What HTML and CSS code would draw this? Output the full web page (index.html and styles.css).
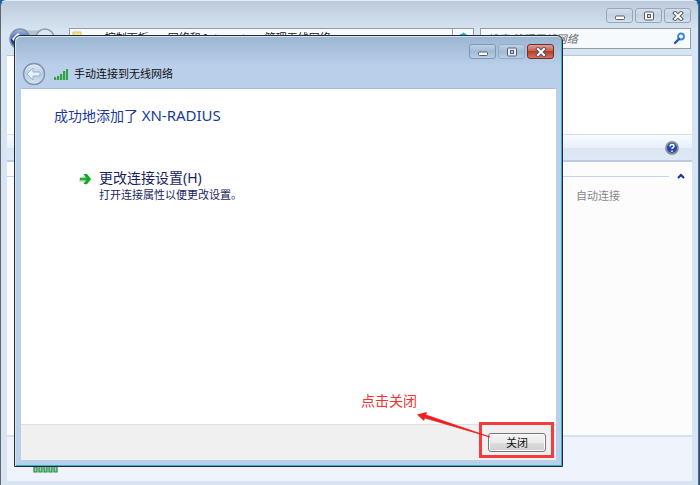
FILE: index.html
```html
<!DOCTYPE html>
<html lang="zh-CN">
<head>
<meta charset="utf-8">
<title>手动连接到无线网络</title>
<link rel="stylesheet" href="styles.css">
</head>
<body>
<main class="window">
  <header class="window-top">
    <div class="captions">
      <button class="cap" type="button" aria-label="最小化"><svg width="12" height="10" viewBox="0 0 12 10"><rect x="1.5" y="5" width="9" height="3.500" rx="1" fill="#fff" stroke="#585d66"/></svg></button>
      <button class="cap" type="button" aria-label="最大化"><svg width="12" height="10" viewBox="0 0 12 10"><rect x="1.5" y="1" width="9" height="8" rx="1" fill="#fff" stroke="#585d66"/><rect x="4.5" y="3.5" width="3" height="3" fill="#cbd6e4" stroke="#585d66"/></svg></button>
      <button class="cap" type="button" aria-label="关闭窗口"><svg width="12" height="10" viewBox="0 0 12 10"><path d="M3 2l6 6M9 2L3 8" stroke="#585d66" stroke-width="4" stroke-linecap="square"/><path d="M3 2l6 6M9 2L3 8" stroke="#fff" stroke-width="2" stroke-linecap="square"/></svg></button>
    </div>
    <div class="nav">
      <svg class="travel" width="48" height="22" viewBox="0 0 48 22">
        <defs><linearGradient id="blue" x2="0" y2="1"><stop offset="0" stop-color="#a9bde4"/><stop offset=".48" stop-color="#4568b4"/><stop offset=".5" stop-color="#062a86"/><stop offset="1" stop-color="#2c8ce0"/></linearGradient></defs>
        <path d="M12 1q12 3 24 0v19H12z" fill="#b7c3d2"/>
        <circle cx="12" cy="11" r="10" fill="url(#blue)" stroke="#8391a8" stroke-width="1.5"/>
        <path d="M6 11h11M11 6l-5 5 5 5" fill="none" stroke="#fff" stroke-width="3"/>
        <circle cx="37" cy="10" r="9" fill="#dce6f1" stroke="#8f9cab" stroke-width="1.5"/>
      </svg>
      <div class="address">
        <svg width="10" height="14" viewBox="0 0 10 14"><path d="M1 1h8v12H1z" fill="#f5e488" stroke="#d8c468"/></svg>
        <span class="crumb first">▸ 控制面板</span><span class="crumb">▸ 网络和 Internet</span><span class="crumb">▸ 管理无线网络</span>
        <span class="refresh"><svg width="12" height="14" viewBox="0 0 12 14"><path d="M2 8q0-4 5-5M7 3v5l3-3z" fill="none" stroke="#29a8d4" stroke-width="2"/></svg></span>
      </div>
      <div class="search">
        <input type="text" aria-label="搜索" placeholder="搜索 管理无线网络">
        <svg width="13" height="13" viewBox="0 0 13 13"><circle cx="8" cy="4.5" r="3" fill="#eff9ff" stroke="#3888d8" stroke-width="1.8"/><path d="M6 7l-4 4" stroke="#2458b0" stroke-width="2.4" stroke-linecap="round"/></svg>
      </div>
    </div>
  </header>
  <section class="explorer">
    <div class="intro"></div>
    <div class="toolbar">
      <button class="help" type="button" aria-label="帮助"><svg width="14" height="14" viewBox="0 0 14 14"><circle cx="7" cy="7" r="6" fill="#2448b4" stroke="#8d9098" stroke-width="1.8"/><path d="M5 5.4q0-2 2-2t2 1.7q0 1-1 1.6-1 .5-1 1.4M7 9.4v1.6" fill="none" stroke="#fff" stroke-width="1.5"/></svg></button>
    </div>
    <div class="list">
      <div class="group"><span class="rule"></span><svg width="8" height="6" viewBox="0 0 8 6"><path d="M1 5l3-3 3 3" fill="none" stroke="#10309a" stroke-width="2"/></svg></div>
      <p class="mode">自动连接</p>
    </div>
    <footer class="details">
      <svg width="25" height="18" viewBox="0 0 25 18"><g fill="#8fd6a0" stroke="#218a42" stroke-width="1.2"><path d="M1 12h3v5H1zM6 10h3v7H6zM11 7h3v10h-3zM16 4h3v13h-3zM21 1h3v16h-3z"/></g></svg>
    </footer>
  </section>

  <section class="dialog" role="dialog" aria-labelledby="dialog-title">
    <header class="dialog-top">
      <div class="captions">
        <button class="cap" type="button" aria-label="最小化"><svg width="12" height="10" viewBox="0 0 12 10"><rect x="1.5" y="5" width="9" height="3.500" rx="1" fill="#fff" stroke="#585d66"/></svg></button>
        <button class="cap" type="button" aria-label="最大化" disabled><svg width="12" height="10" viewBox="0 0 12 10"><rect x="1.5" y="1" width="9" height="8" rx="1" fill="#e8eef6" stroke="#585d76"/><rect x="4.5" y="3.5" width="3" height="3" fill="#aec4de" stroke="#585d76"/></svg></button>
        <button class="cap red" type="button" aria-label="关闭窗口"><svg width="12" height="10" viewBox="0 0 12 10"><path d="M3 2l6 6M9 2L3 8" stroke="#585066" stroke-width="4" stroke-linecap="square"/><path d="M3 2l6 6M9 2L3 8" stroke="#fff" stroke-width="2" stroke-linecap="square"/></svg></button>
      </div>
      <div class="caption-row">
        <button class="back" type="button" aria-label="返回"><svg width="24" height="24" viewBox="0 0 24 24">
          <defs><linearGradient id="pale" x2="0" y2="1"><stop offset="0" stop-color="#e3ecf6"/><stop offset=".5" stop-color="#b9cde1"/><stop offset="1" stop-color="#d3e5f6"/></linearGradient></defs>
          <circle cx="12" cy="12" r="10.5" fill="url(#pale)" stroke="#8194aa" stroke-width="1.4"/><path d="M5 12l6-6v4h7v4h-7v4z" fill="#e8f1fa" stroke="#9cb2c9"/></svg></button>
        <svg class="signal" width="14" height="13" viewBox="0 0 14 13"><path d="M0 9h2v3H0zM3 8h2v4H3zM6 6h2v6H6zM9 3h2v9H9zM12 1h2v11h-2z" fill="#35a050"/><path d="M2.500 10v2M5.500 8v4M8.500 6v6M11.500 3v9" stroke="#8fcba2"/></svg>
        <h1 id="dialog-title">手动连接到无线网络</h1>
      </div>
    </header>
    <div class="page">
      <h2>成功地添加了 <span class="ssid">XN-RADIUS</span></h2>
      <a class="command" href="#settings">
        <svg width="14" height="14" viewBox="0 0 14 14"><path d="M1 8h9M6.500 3l4.500 4.500L6.500 12" fill="none" stroke="#dcdfdc" stroke-width="4"/><path d="M2 7h8" stroke="#19b52a" stroke-width="2.800"/><path d="M5.500 2H9l4 5-4 5H5.500L9 7z" fill="#12a822"/></svg>
        <span class="command-text"><span class="command-title">更改连接设置(H)</span><span class="command-note">打开连接属性以便更改设置。</span></span>
      </a>
    </div>
    <footer class="actions">
      <button class="close" type="button">关闭</button>
      <div class="callout">
        <span class="callout-label">点击关闭</span>
        <svg class="callout-arrow" width="74" height="28" viewBox="0 0 74 28"><path d="M73 26L9 4 8 7z" fill="#f01c20" stroke="#f01c20" stroke-width=".8"/><path d="M0 3.500L10 1 7 10z" fill="#f01c20"/></svg>
      </div>
    </footer>
  </section>
</main>
</body>
</html>
```
FILE: styles.css
```css
* { box-sizing: border-box; }
html, body { height: 100%; }
body {
  margin: 0;
  background: linear-gradient(90deg, #1464b4, #0c4a94 50%, #14549e);
  font: 11px/14px "Noto Sans", "Noto Sans CJK SC", sans-serif;
  color: #111;
}
button { padding: 0; border: 0; background: none; font: inherit; color: inherit; }
svg { display: block; flex: none; }
h1, h2, p { margin: 0; font-weight: 400; }

.window {
  position: relative;
  display: flex;
  flex-direction: column;
  min-height: 100%;
  margin-right: 1px;
  padding: 0 6px 4px;
  border: solid #60676f;
  border-width: 1px 1px 0;
  border-top-color: #e4edf5;
  border-radius: 6px 6px 0 0;
  background: linear-gradient(#bccbdb, #d7e4f2 30px);
}
.window-top { display: flex; flex-direction: column; gap: 5px; padding: 7px 1px 6px 0; }
.captions { display: flex; justify-content: flex-end; gap: 2px; }
.cap {
  display: grid;
  place-items: center;
  width: 27px;
  height: 15px;
  border: 1px solid #96a5b8;
  border-radius: 3px;
  background: linear-gradient(#d3dfeb, #c3d1e0 50%, #d3e0ed);
}
.nav { display: flex; height: 21px; }
.travel { margin-left: 1px; }
.address, .search {
  display: flex;
  border: 1px solid #959da4;
  background: #f7fafc;
}
.address { flex: 1; margin-left: 13px; padding: 2px 0 0 2px; color: #222; white-space: nowrap; overflow: hidden; }
.crumb { margin-left: 10px; }
.crumb.first { margin-left: 14px; }
.refresh { margin: -2px 0 0 auto; padding: 2px 4px; border-left: 1px solid #959da4; }
.search { align-items: center; width: 211px; margin-left: 6px; padding-right: 4px; }
.search input {
  flex: 1;
  min-width: 0;
  padding: 0 6px;
  border: 0;
  outline: 0;
  background: none;
  font: inherit;
  font-style: italic;
}
.search input::placeholder { color: #666; opacity: 1; }

.explorer { display: flex; flex: 1; flex-direction: column; background: #fcfcfc; border-top: 1px solid #b7c6d6; }
.intro { height: 78px; background: #fff; }
.toolbar {
  display: flex;
  align-items: center;
  justify-content: flex-end;
  height: 28px;
  padding-right: 13px;
  border-top: 1px solid #d4e0ee;
  border-bottom: 2px solid #bccbe0;
  background: linear-gradient(#f8fbff, #e8f0fa 50%, #dbe5f3 52%, #dee8f6);
}
.list { flex: 1; padding: 10px 7px 0 0; }
.group { display: flex; align-items: center; gap: 7px; height: 8px; }
.rule { flex: 1; margin-right: 1px; border-top: 1px solid #c5d4ea; }
.mode { width: 109px; margin: 9px 0 0 auto; color: #888; }
.details { display: flex; height: 46px; padding: 18px 26px 0; border-top: 2px solid #d6e0ee; background: #eff3fb; }

.dialog {
  position: absolute;
  inset: 34px 135px 18px 13px;
  display: flex;
  flex-direction: column;
  padding: 0 6px 6px;
  border: 1px solid #222b33;
  border-radius: 6px 6px 0 0;
  background: linear-gradient(#9bb5d1, #b9cfea 30px);
  box-shadow: inset 1px 1px #d6e5f4, inset -1px -1px #39b0c8;
}
.dialog-top { padding: 8px 2px 1px; border-bottom: 1px solid #a9bdd7; }
.dialog .cap { border-color: #7f97b4; background: linear-gradient(#bfd2e7, #a1bad5 50%, #b7cfe8); }
.dialog .cap:disabled { border-color: #91abc9; }
.dialog .cap.red { border-color: #702e36; background: linear-gradient(#dc9d92, #c85e4c 48%, #b43e2b 50%, #d57459); }
.caption-row { display: flex; align-items: center; gap: 5px; height: 26px; margin-top: 2px; }
.signal { margin: 0 1px 0 3px; }
.back { margin-left: -1px; }
h1 { font-size: 11px; line-height: 14px; }
.page { flex: 1; padding: 16px 33px; background: #fff; }
h2 { font-size: 14px; line-height: 20px; color: #173a9c; }
.ssid { font-size: 15px; }
.command { display: flex; gap: 7px; margin: 42px 0 0 24px; color: #1b1e62; text-decoration: none; }
.command > svg { margin-top: 4px; }
.command-text, .command-title, .command-note { display: block; }
.command-title { font-size: 14px; line-height: 20px; }
.actions {
  position: relative;
  display: flex;
  align-items: center;
  justify-content: flex-end;
  height: 36px;
  padding-right: 10px;
  border-top: 1px solid #dfdfdf;
  background: #f0f0f0;
}
.close {
  width: 58px;
  height: 19px;
  border: 1px solid #777;
  border-radius: 3px;
  background: linear-gradient(#f3f3f3, #ebebeb 50%, #dcdcdc 51%, #cfcfcf);
  box-shadow: inset 0 0 0 1px #fafafa;
}
/* Annotation frame drawn over the close button */
.callout {
  position: absolute;
  top: -3px;
  right: 2px;
  width: 75px;
  height: 36px;
  border: 3px solid #f43b3d;
  pointer-events: none;
}
.callout-label {
  position: absolute;
  right: 134px;
  bottom: 44px;
  color: #f43033;
  font-size: 14px;
  line-height: 20px;
  white-space: nowrap;
}
.callout-arrow { position: absolute; right: 60px; bottom: 16px; }
```
